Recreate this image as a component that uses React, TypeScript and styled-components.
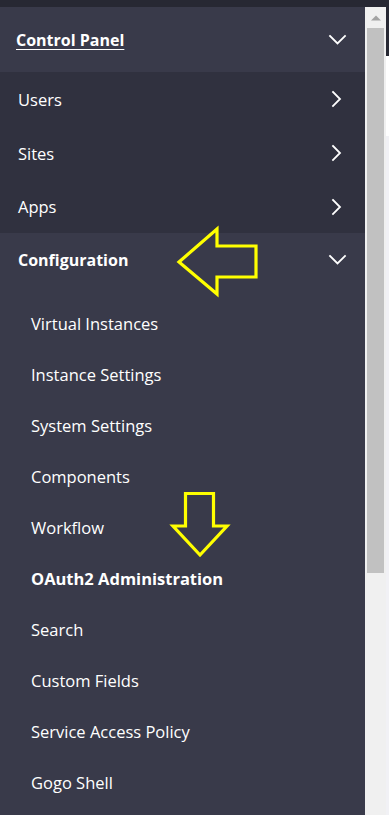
import React from "react";
import styled, { createGlobalStyle } from "styled-components";

const GlobalStyle = createGlobalStyle`
  html, body { margin: 0; padding: 0; background: #f1f1f5; }
  body { font-family: "Open Sans", "Noto Sans", "Liberation Sans", sans-serif; }
  * { box-sizing: border-box; }
`;

const Page = styled.div`
  position: relative;
  width: 389px;
  height: 815px;
  overflow: hidden;
  display: flex;
  flex-direction: column;
`;

const TopStrip = styled.div`
  height: 7px;
  flex: none;
  background: #272833;
`;

const Body = styled.div`
  flex: 1;
  display: flex;
  min-height: 0;
`;

const Sidebar = styled.nav`
  width: 365px;
  flex: none;
  background: #393a4a;
  display: flex;
  flex-direction: column;
  color: #ffffff;
`;

const PanelHeader = styled.div`
  height: 65px;
  display: flex;
  align-items: center;
  justify-content: space-between;
  padding: 0 18px 0 16px;
  background: #393a4a;
`;

const PanelTitle = styled.a`
  font-size: 16px;
  font-weight: 700;
  color: #ffffff;
  text-decoration: underline;
  text-underline-offset: 3px;
  text-decoration-thickness: 1px;
`;

const DarkGroup = styled.div`
  background: #30313f;
  display: flex;
  flex-direction: column;
`;

const NavRow = styled.div<{ $h: number }>`
  height: ${(p) => p.$h}px;
  display: flex;
  align-items: center;
  justify-content: space-between;
  padding: 0 18px 0 18px;
  font-size: 16.5px;
  font-weight: 400;
`;

const SectionHeader = styled.div`
  height: 54px;
  display: flex;
  align-items: center;
  justify-content: space-between;
  padding: 0 18px 0 18px;
  font-size: 16px;
  font-weight: 700;
`;

const SubList = styled.ul`
  list-style: none;
  margin: 0;
  padding: 11px 0 0 0;
`;

const SubItem = styled.li<{ $active?: boolean }>`
  height: 51px;
  display: flex;
  align-items: center;
  padding-left: 31px;
  font-size: 16.5px;
  font-weight: ${(p) => (p.$active ? 700 : 400)};
`;

const IconBox = styled.svg`
  width: 20px;
  height: 20px;
  flex: none;
  display: block;
`;

const Scrollbar = styled.div`
  width: 21px;
  flex: none;
  background: #f0f0f0;
  display: flex;
  flex-direction: column;
  padding: 0 2px;
`;

const ScrollButton = styled.div`
  height: 21px;
  flex: none;
  display: flex;
  align-items: center;
  justify-content: center;
`;

const Thumb = styled.div`
  height: 545px;
  flex: none;
  background: #c1c1c1;
`;

const RightEdge = styled.div`
  width: 3px;
  flex: none;
  display: flex;
  flex-direction: column;
`;

const EdgePart = styled.div<{ $h?: number; $c: string }>`
  background: ${(p) => p.$c};
  ${(p) => (p.$h ? `height: ${p.$h}px; flex: none;` : "flex: 1;")}
`;

const Overlay = styled.svg`
  position: absolute;
  left: 0;
  top: 0;
  width: 389px;
  height: 815px;
  pointer-events: none;
`;

const Chevron = ({ dir }: { dir: "down" | "right" }) => (
  <IconBox viewBox="0 0 20 20">
    <polyline
      points={dir === "down" ? "3,6 10.5,13.5 18,6" : "6,3 13,10 6,17"}
      fill="none"
      stroke="#ffffff"
      strokeWidth="1.8"
      strokeLinecap="square"
      strokeLinejoin="miter"
    />
  </IconBox>
);

const groups = [
  { label: "Users", h: 54 },
  { label: "Sites", h: 54 },
  { label: "Apps", h: 53 },
];

const configItems = [
  "Virtual Instances",
  "Instance Settings",
  "System Settings",
  "Components",
  "Workflow",
  "OAuth2 Administration",
  "Search",
  "Custom Fields",
  "Service Access Policy",
  "Gogo Shell",
];

export default function App() {
  return (
    <>
      <GlobalStyle />
      <Page>
        <TopStrip />
        <Body>
          <Sidebar>
            <PanelHeader>
              <PanelTitle href="#">Control Panel</PanelTitle>
              <Chevron dir="down" />
            </PanelHeader>
            <DarkGroup>
              {groups.map((g) => (
                <NavRow key={g.label} $h={g.h}>
                  <span>{g.label}</span>
                  <Chevron dir="right" />
                </NavRow>
              ))}
            </DarkGroup>
            <SectionHeader>
              <span>Configuration</span>
              <Chevron dir="down" />
            </SectionHeader>
            <SubList>
              {configItems.map((item) => (
                <SubItem key={item} $active={item === "OAuth2 Administration"}>
                  {item}
                </SubItem>
              ))}
            </SubList>
          </Sidebar>
          <Scrollbar>
            <ScrollButton>
              <svg width="10" height="6" viewBox="0 0 10 6">
                <polygon points="0,5.5 5,0.5 10,5.5" fill="#a3a3a3" />
              </svg>
            </ScrollButton>
            <Thumb />
          </Scrollbar>
          <RightEdge>
            <EdgePart $h={49} $c="#272833" />
            <EdgePart $h={80} $c="#ffffff" />
            <EdgePart $c="#f1f1f5" />
          </RightEdge>
        </Body>
        <Overlay viewBox="0 0 389 815">
          <polygon
            points="179,262 217,229 217,246 256,246 256,277 217,277 217,294"
            fill="none"
            stroke="#ffff00"
            strokeWidth="3.2"
            strokeLinejoin="miter"
          />
          <polygon
            points="185.5,493.5 213.5,493.5 213.5,526 227,526 200,555 173,526 185.5,526"
            fill="none"
            stroke="#ffff00"
            strokeWidth="3.2"
            strokeLinejoin="miter"
          />
        </Overlay>
      </Page>
    </>
  );
}
